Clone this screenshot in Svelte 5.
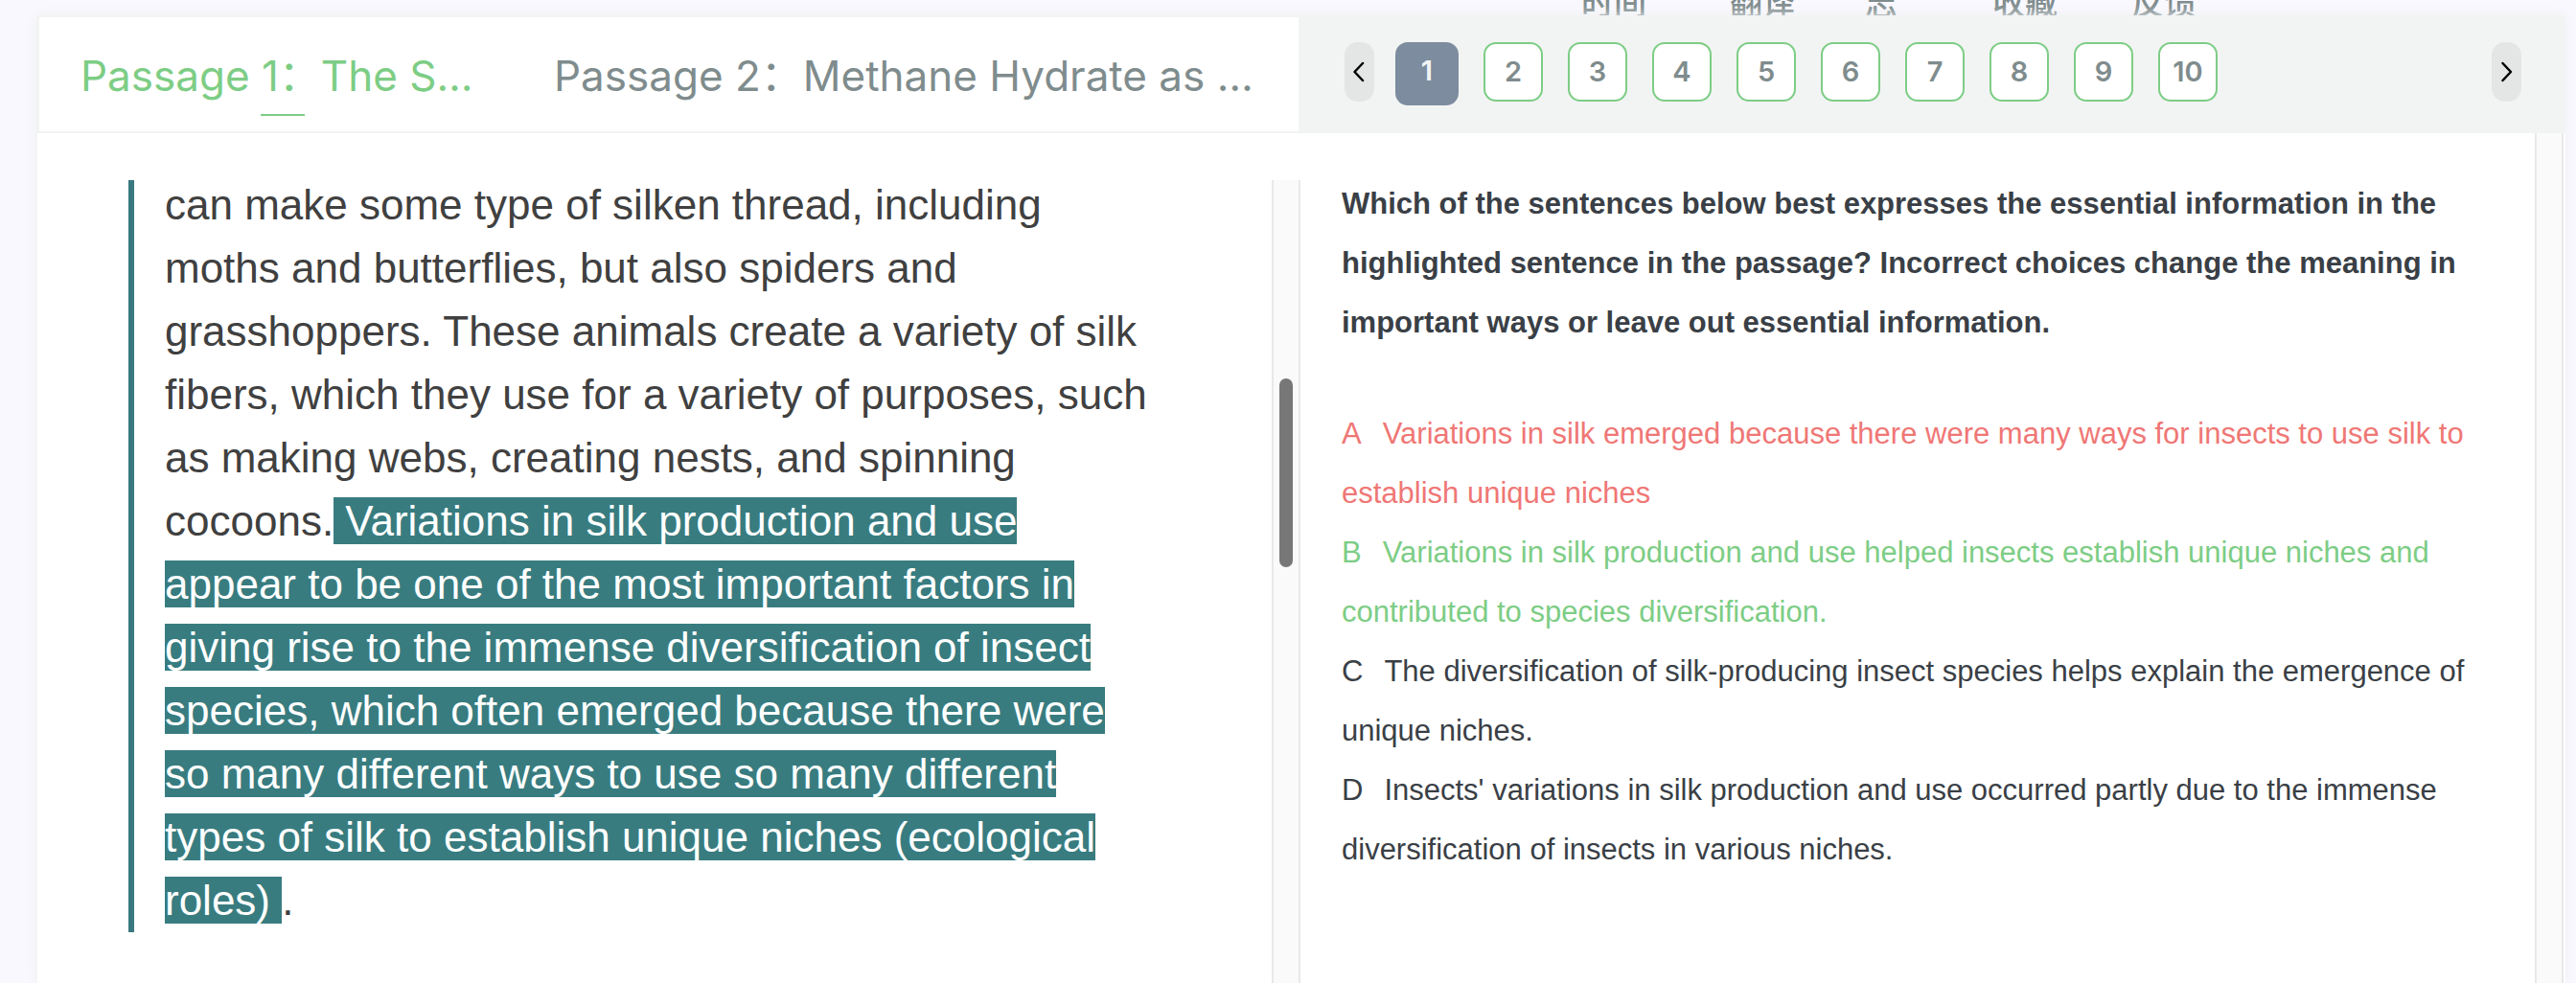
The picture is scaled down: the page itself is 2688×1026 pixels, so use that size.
<script>
  const tools = ['时间', '翻译', '志', '收藏', '反馈'];
  const questions = [1, 2, 3, 4, 5, 6, 7, 8, 9, 10];
  let current = $state(1);
  let passage = $state(1);
  const options = [
    { key: 'A', state: 'wrong', text: 'Variations in silk emerged because there were many ways for insects to use silk to establish unique niches' },
    { key: 'B', state: 'right', text: 'Variations in silk production and use helped insects establish unique niches and contributed to species diversification.' },
    { key: 'C', state: '', text: 'The diversification of silk-producing insect species helps explain the emergence of unique niches.' },
    { key: 'D', state: '', text: "Insects' variations in silk production and use occurred partly due to the immense diversification of insects in various niches." }
  ];
</script>

<div class="page">
  <div class="tools">
    {#each tools as tool}<span>{tool}</span>{/each}
  </div>
  <main class="card">
    <section class="passage">
      <nav class="tabs" aria-label="Passages">
        <button class="tab" class:active={passage === 1} onclick={() => (passage = 1)}>Passage 1：The S…</button>
        <button class="tab" class:active={passage === 2} onclick={() => (passage = 2)}>Passage 2：Methane Hydrate as …</button>
      </nav>
      <div class="reader">
        <article>
          <p>can make some type of silken thread, including moths and butterflies, but also spiders and grasshoppers. These animals create a variety of silk fibers, which they use for a variety of purposes, such as making webs, creating nests, and spinning cocoons.<mark>&nbsp;Variations in silk production and use appear to be one of the most important factors in giving rise to the immense diversification of insect species, which often emerged because there were so many different ways to use so many different types of silk to establish unique niches (ecological roles)&nbsp;</mark>.</p>
        </article>
        <div class="track"><div class="thumb"></div></div>
      </div>
    </section>
    <section>
      <nav class="pager" aria-label="Questions">
        <button class="arrow" aria-label="Previous">
          <svg viewBox="0 0 14 22"><path d="M10 2 L1.5 11 L10 20" /></svg>
        </button>
        <div class="numbers">
          {#each questions as n}
            <button class="num" class:current={current === n} onclick={() => (current = n)}>{n}</button>
          {/each}
        </div>
        <button class="arrow" aria-label="Next">
          <svg viewBox="0 0 14 22"><path d="M2.5 2 L11 11 L2.5 20" /></svg>
        </button>
      </nav>
      <div class="question">
        <div class="body">
          <h2>Which of the sentences below best expresses the essential information in the highlighted sentence in the passage? Incorrect choices change the meaning in important ways or leave out essential information.</h2>
          <ul>
            {#each options as o}
              <li class={o.state}><span class="key">{o.key}</span>{o.text}</li>
            {/each}
          </ul>
        </div>
        <div class="track plain"></div>
      </div>
    </section>
  </main>
</div>

<style>
  :global(body) { margin: 0; background: #f9f8fe; }
  .page {
    box-sizing: border-box;
    height: 100vh;
    overflow: hidden;
    display: flex;
    flex-direction: column;
    padding: 0 11px 0 38px;
    font-family: "Liberation Sans", "Noto Sans CJK SC", sans-serif;
  }
  .tools {
    height: 16px;
    flex: none;
    display: grid;
    grid-template-columns: 155px 141px 133px 145px 68px;
    align-content: end;
    overflow: hidden;
    padding-left: 1612px;
    color: #7f8c8d;
    font-size: 34px;
    font-weight: 500;
    line-height: 26px;
    white-space: nowrap;
  }
  .card {
    flex: 1;
    min-height: 0;
    display: grid;
    grid-template-columns: 1317fr 1322fr;
    background: #fff;
    box-shadow: 0 0 12px #eef0f2;
  }
  section { display: flex; flex-direction: column; min-width: 0; min-height: 0; }
  .passage { border-left: 1px solid #f2f4f3; }
  button { font-family: inherit; cursor: pointer; }
  .tabs {
    box-sizing: border-box;
    height: 123px;
    flex: none;
    display: flex;
    align-items: center;
    gap: 72px;
    padding: 2px 0 0 43px;
    border: solid #f2f4f3;
    border-width: 2px 0 2px 2px;
  }
  .tab {
    position: relative;
    min-width: 422px;
    border: 0;
    padding: 0;
    background: none;
    color: #7f8c8d;
    font-family: Inter, "Noto Sans CJK SC", sans-serif;
    font-size: 44px;
    line-height: 60px;
    text-align: left;
    white-space: nowrap;
  }
  .active { color: #7dcd85; }
  .active::after {
    content: "";
    position: absolute;
    left: 50%;
    bottom: -12px;
    width: 46px;
    height: 2px;
    margin-left: -23px;
    background: #7dcd85;
  }
  .reader { flex: 1; min-height: 0; display: flex; margin-top: 49px; }
  article { flex: 1; min-width: 0; overflow: hidden; padding: 0 124px 0 95px; }
  p {
    margin: -7px 0 0;
    padding-left: 32px;
    border-left: 6px solid #39787f;
    color: #404040;
    font-size: 44px;
    line-height: 66px;
  }
  mark { background: #387c80; color: #fff; }
  .track {
    box-sizing: border-box;
    flex: none;
    width: 30px;
    padding: 207px 6px 0;
    background: #fafafa;
    border: solid #e8e8e8;
    border-width: 0 2px;
    margin-right: -2px;
  }
  .thumb { width: 14px; height: 197px; border-radius: 7px; background: #777; }
  .plain { margin-right: 2px; }
  .pager {
    box-sizing: border-box;
    height: 123px;
    flex: none;
    display: flex;
    align-items: flex-start;
    padding: 28px 46px 0 48px;
    background: #f2f4f3;
  }
  .arrow {
    flex: none;
    width: 31px;
    height: 62px;
    border: 0;
    border-radius: 14px;
    background: #e4e6e5;
    padding: 0;
    display: flex;
    align-items: center;
    justify-content: center;
  }
  .arrow svg { width: 14px; height: 22px; fill: none; stroke: #000; stroke-width: 2.5; stroke-linecap: round; stroke-linejoin: round; }
  .numbers { flex: 1; display: flex; gap: 26px; padding-left: 22px; }
  .num {
    box-sizing: border-box;
    width: 62px;
    height: 62px;
    border: 2px solid #7dcd85;
    border-radius: 13px;
    background: #fff;
    color: #7f8c8d;
    font-family: Inter, sans-serif;
    font-weight: 600;
    font-size: 29px;
    line-height: 36px;
    padding: 0;
  }
  .current { width: 66px; height: 66px; border: 0; background: #7d8c9f; color: #f2f4f3; padding-bottom: 6px; }
  .question { flex: 1; min-height: 0; display: flex; }
  .body { flex: 1; min-width: 0; padding: 43px 66px 0 45px; color: #3a3f46; }
  h2, ul { margin: 0; padding: 0; font-size: 31px; line-height: 62px; }
  h2 { font-weight: 700; margin-bottom: 54px; }
  ul { list-style: none; }
  .key { margin-right: 22px; }
  .wrong { color: #ef7775; }
  .right { color: #7dcd85; }
</style>
